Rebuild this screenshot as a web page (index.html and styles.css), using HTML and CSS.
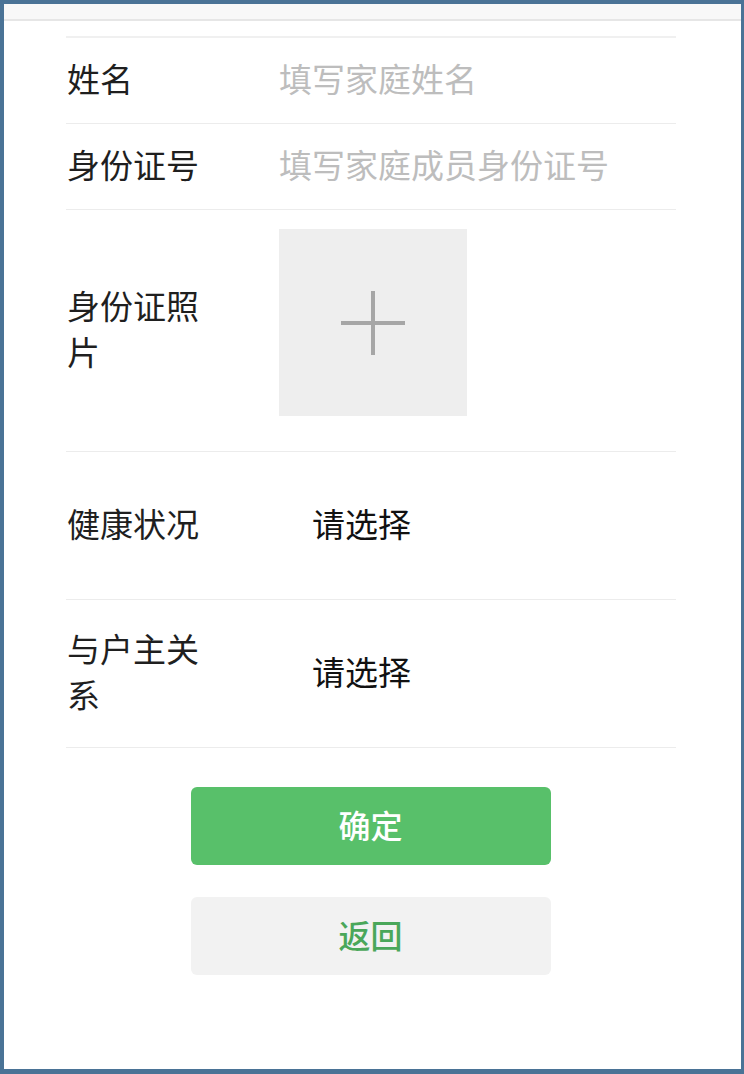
FILE: index.html
```html
<!DOCTYPE html>
<html lang="zh">
<head>
<meta charset="utf-8">
<title>家庭成员</title>
<link rel="stylesheet" href="styles.css">
</head>
<body>
<div class="frame">
  <div class="topbar"></div>
  <div class="form">
    <div class="row">
      <div class="label"><span class="label-text">姓名</span></div>
      <div class="field placeholder">填写家庭姓名</div>
    </div>
    <div class="row">
      <div class="label"><span class="label-text">身份证号</span></div>
      <div class="field placeholder">填写家庭成员身份证号</div>
    </div>
    <div class="row row-photo">
      <div class="label"><span class="label-text">身份证照片</span></div>
      <div class="field">
        <div class="upload">
          <svg width="64" height="64" viewBox="0 0 64 64" aria-hidden="true">
            <rect x="30" y="0" width="4" height="64" fill="#a6a6a6"/>
            <rect x="0" y="30" width="64" height="4" fill="#a6a6a6"/>
          </svg>
        </div>
      </div>
    </div>
    <div class="row row-picker">
      <div class="label"><span class="label-text">健康状况</span></div>
      <div class="field picker">请选择</div>
    </div>
    <div class="row row-picker">
      <div class="label"><span class="label-text">与户主关系</span></div>
      <div class="field picker">请选择</div>
    </div>
  </div>
  <div class="actions">
    <button class="btn btn-primary">确定</button>
    <button class="btn btn-default">返回</button>
  </div>
</div>
</body>
</html>
```
FILE: styles.css
```css
html, body {
  margin: 0;
  padding: 0;
  background: #ffffff;
}
body {
  font-family: "Noto Sans CJK SC", "Noto Sans", sans-serif;
  color: #1f1f1f;
}
.frame {
  box-sizing: border-box;
  width: 744px;
  height: 1074px;
  border-style: solid;
  border-color: #4a7396;
  border-width: 4px 3px 5px 4px;
  background: #ffffff;
  overflow: hidden;
}
.topbar {
  height: 15px;
  background: #f8f8f8;
  border-bottom: 2px solid #e6e6e6;
}
.form {
  margin: 15px 65px 0 62px;
  border-top: 2px solid #f0f0f0;
}
.row {
  display: flex;
  align-items: center;
  border-bottom: 1px solid #ececec;
  padding: 16.5px 0 22.5px 0;
  font-size: 33px;
  line-height: 46px;
}
.label {
  width: 213px;
  flex: none;
  padding-left: 1px;
  box-sizing: border-box;
}
.label-text {
  display: block;
  width: 140px;
}
.field {
  flex: 1;
}
.placeholder {
  color: #bdbdbd;
}
.row-photo {
  padding: 19px 0 35px 0;
}
.upload {
  width: 188px;
  height: 187px;
  background: #eeeeee;
  display: flex;
  align-items: center;
  justify-content: center;
}
.row-photo .label {
  margin-top: 10px;
}
.row-picker {
  box-sizing: border-box;
  padding: 0 0 6px 0;
  min-height: 148px;
}
.picker {
  padding-left: 33px;
  color: #111111;
}
.actions {
  display: flex;
  flex-direction: column;
  align-items: center;
  gap: 32px;
  margin-top: 39px;
  padding-right: 4px;
}
.btn {
  width: 360px;
  height: 78px;
  border: none;
  border-radius: 6px;
  font-family: "Noto Sans CJK SC", "Noto Sans", sans-serif;
  font-size: 32px;
  font-weight: 500;
  padding: 0 0 4px 0;
}
.btn-primary {
  background: #58c06a;
  color: #ffffff;
}
.btn-default {
  background: #f2f2f2;
  color: #4aa75a;
}
```
